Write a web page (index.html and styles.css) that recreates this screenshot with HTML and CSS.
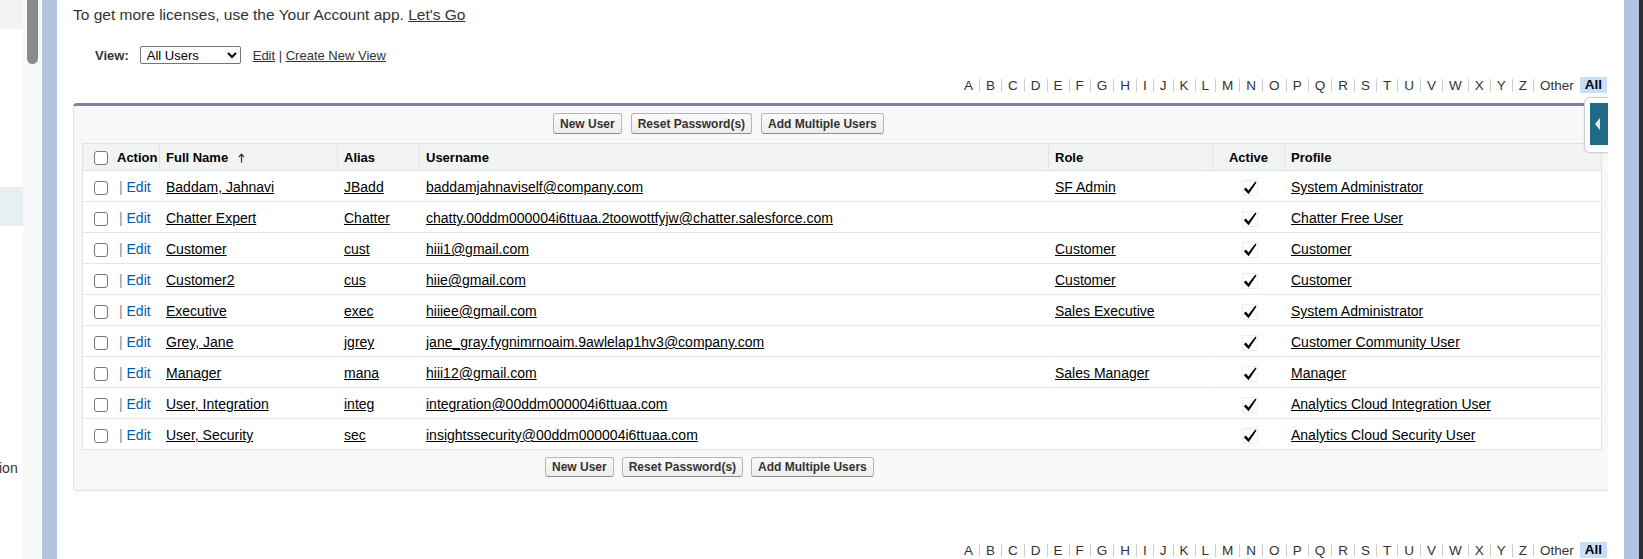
FILE: index.html
```html
<!DOCTYPE html>
<html>
<head>
<meta charset="utf-8">
<title>Users</title>
<link rel="stylesheet" href="styles.css">
</head>
<body>
<div class="frame">
  <aside class="sidebar">
    <div class="sb-top"></div>
    <div class="sb-sel"></div>
    <div class="sb-text">ion</div>
  </aside>
  <div class="scrolltrack"><div class="thumb"></div></div>
  <div class="bluebar"></div>
  <main class="content">
    <p class="notice">To get more licenses, use the Your Account app. <a href="#">Let's Go</a></p>
    <div class="viewrow">
      <label class="viewlabel">View:</label>
      <select class="viewselect"><option>All Users</option></select>
      <span class="viewlinks"><a href="#">Edit</a> | <a href="#">Create New View</a></span>
    </div>
    <div class="alpha">
      <span>A</span><span>B</span><span>C</span><span>D</span><span>E</span><span>F</span><span>G</span><span>H</span><span>I</span><span>J</span><span>K</span><span>L</span><span>M</span><span>N</span><span>O</span><span>P</span><span>Q</span><span>R</span><span>S</span><span>T</span><span>U</span><span>V</span><span>W</span><span>X</span><span>Y</span><span>Z</span><span>Other</span><span class="all">All</span>
    </div>
    <div class="panel">
      <div class="btnrow btnrow-top">
        <button class="btn">New User</button><button class="btn">Reset Password(s)</button><button class="btn">Add Multiple Users</button>
      </div>
      <table class="list">
        <colgroup>
          <col class="c-action"><col class="c-name"><col class="c-alias"><col class="c-user"><col class="c-role"><col class="c-active"><col class="c-profile">
        </colgroup>
        <thead>
          <tr>
            <th class="th-action"><input type="checkbox" class="cb"><span class="action-label">Action</span></th>
            <th>Full Name <svg class="sortarrow" width="7" height="10" viewBox="0 0 7 10"><path d="M3.5 9.5V1.5M1 4L3.5 1.2L6 4" fill="none" stroke="#333" stroke-width="1.2"/></svg></th>
            <th>Alias</th>
            <th>Username</th>
            <th>Role</th>
            <th class="th-active">Active</th>
            <th>Profile</th>
          </tr>
        </thead>
        <tbody>
          <tr>
            <td class="td-action"><input type="checkbox" class="cb"><span class="pipe">|</span> <a href="#" class="edit">Edit</a></td>
            <td><a href="#">Baddam, Jahnavi</a></td><td><a href="#">JBadd</a></td><td><a href="#">baddamjahnaviself@company.com</a></td><td><a href="#">SF Admin</a></td>
            <td class="td-active"><svg class="chk" width="16" height="16" viewBox="0 0 16 16"><rect x="0.5" y="0.5" width="15" height="15" fill="none" stroke="#dadada" stroke-dasharray="1 1"/><path d="M1.8 9.2L3.9 7.6L6.4 10.6L13.4 1.6L14.5 2.5L6.6 14.2Z" fill="#000"/></svg></td>
            <td><a href="#">System Administrator</a></td>
          </tr>
          <tr>
            <td class="td-action"><input type="checkbox" class="cb"><span class="pipe">|</span> <a href="#" class="edit">Edit</a></td>
            <td><a href="#">Chatter Expert</a></td><td><a href="#">Chatter</a></td><td><a href="#">chatty.00ddm000004i6ttuaa.2toowottfyjw@chatter.salesforce.com</a></td><td></td>
            <td class="td-active"><svg class="chk" width="16" height="16" viewBox="0 0 16 16"><rect x="0.5" y="0.5" width="15" height="15" fill="none" stroke="#dadada" stroke-dasharray="1 1"/><path d="M1.8 9.2L3.9 7.6L6.4 10.6L13.4 1.6L14.5 2.5L6.6 14.2Z" fill="#000"/></svg></td>
            <td><a href="#">Chatter Free User</a></td>
          </tr>
          <tr>
            <td class="td-action"><input type="checkbox" class="cb"><span class="pipe">|</span> <a href="#" class="edit">Edit</a></td>
            <td><a href="#">Customer</a></td><td><a href="#">cust</a></td><td><a href="#">hiii1@gmail.com</a></td><td><a href="#">Customer</a></td>
            <td class="td-active"><svg class="chk" width="16" height="16" viewBox="0 0 16 16"><rect x="0.5" y="0.5" width="15" height="15" fill="none" stroke="#dadada" stroke-dasharray="1 1"/><path d="M1.8 9.2L3.9 7.6L6.4 10.6L13.4 1.6L14.5 2.5L6.6 14.2Z" fill="#000"/></svg></td>
            <td><a href="#">Customer</a></td>
          </tr>
          <tr>
            <td class="td-action"><input type="checkbox" class="cb"><span class="pipe">|</span> <a href="#" class="edit">Edit</a></td>
            <td><a href="#">Customer2</a></td><td><a href="#">cus</a></td><td><a href="#">hiie@gmail.com</a></td><td><a href="#">Customer</a></td>
            <td class="td-active"><svg class="chk" width="16" height="16" viewBox="0 0 16 16"><rect x="0.5" y="0.5" width="15" height="15" fill="none" stroke="#dadada" stroke-dasharray="1 1"/><path d="M1.8 9.2L3.9 7.6L6.4 10.6L13.4 1.6L14.5 2.5L6.6 14.2Z" fill="#000"/></svg></td>
            <td><a href="#">Customer</a></td>
          </tr>
          <tr>
            <td class="td-action"><input type="checkbox" class="cb"><span class="pipe">|</span> <a href="#" class="edit">Edit</a></td>
            <td><a href="#">Executive</a></td><td><a href="#">exec</a></td><td><a href="#">hiiiee@gmail.com</a></td><td><a href="#">Sales Executive</a></td>
            <td class="td-active"><svg class="chk" width="16" height="16" viewBox="0 0 16 16"><rect x="0.5" y="0.5" width="15" height="15" fill="none" stroke="#dadada" stroke-dasharray="1 1"/><path d="M1.8 9.2L3.9 7.6L6.4 10.6L13.4 1.6L14.5 2.5L6.6 14.2Z" fill="#000"/></svg></td>
            <td><a href="#">System Administrator</a></td>
          </tr>
          <tr>
            <td class="td-action"><input type="checkbox" class="cb"><span class="pipe">|</span> <a href="#" class="edit">Edit</a></td>
            <td><a href="#">Grey, Jane</a></td><td><a href="#">jgrey</a></td><td><a href="#">jane_gray.fygnimrnoaim.9awlelap1hv3@company.com</a></td><td></td>
            <td class="td-active"><svg class="chk" width="16" height="16" viewBox="0 0 16 16"><rect x="0.5" y="0.5" width="15" height="15" fill="none" stroke="#dadada" stroke-dasharray="1 1"/><path d="M1.8 9.2L3.9 7.6L6.4 10.6L13.4 1.6L14.5 2.5L6.6 14.2Z" fill="#000"/></svg></td>
            <td><a href="#">Customer Community User</a></td>
          </tr>
          <tr>
            <td class="td-action"><input type="checkbox" class="cb"><span class="pipe">|</span> <a href="#" class="edit">Edit</a></td>
            <td><a href="#">Manager</a></td><td><a href="#">mana</a></td><td><a href="#">hiii12@gmail.com</a></td><td><a href="#">Sales Manager</a></td>
            <td class="td-active"><svg class="chk" width="16" height="16" viewBox="0 0 16 16"><rect x="0.5" y="0.5" width="15" height="15" fill="none" stroke="#dadada" stroke-dasharray="1 1"/><path d="M1.8 9.2L3.9 7.6L6.4 10.6L13.4 1.6L14.5 2.5L6.6 14.2Z" fill="#000"/></svg></td>
            <td><a href="#">Manager</a></td>
          </tr>
          <tr>
            <td class="td-action"><input type="checkbox" class="cb"><span class="pipe">|</span> <a href="#" class="edit">Edit</a></td>
            <td><a href="#">User, Integration</a></td><td><a href="#">integ</a></td><td><a href="#">integration@00ddm000004i6ttuaa.com</a></td><td></td>
            <td class="td-active"><svg class="chk" width="16" height="16" viewBox="0 0 16 16"><rect x="0.5" y="0.5" width="15" height="15" fill="none" stroke="#dadada" stroke-dasharray="1 1"/><path d="M1.8 9.2L3.9 7.6L6.4 10.6L13.4 1.6L14.5 2.5L6.6 14.2Z" fill="#000"/></svg></td>
            <td><a href="#">Analytics Cloud Integration User</a></td>
          </tr>
          <tr>
            <td class="td-action"><input type="checkbox" class="cb"><span class="pipe">|</span> <a href="#" class="edit">Edit</a></td>
            <td><a href="#">User, Security</a></td><td><a href="#">sec</a></td><td><a href="#">insightssecurity@00ddm000004i6ttuaa.com</a></td><td></td>
            <td class="td-active"><svg class="chk" width="16" height="16" viewBox="0 0 16 16"><rect x="0.5" y="0.5" width="15" height="15" fill="none" stroke="#dadada" stroke-dasharray="1 1"/><path d="M1.8 9.2L3.9 7.6L6.4 10.6L13.4 1.6L14.5 2.5L6.6 14.2Z" fill="#000"/></svg></td>
            <td><a href="#">Analytics Cloud Security User</a></td>
          </tr>
        </tbody>
      </table>
      <div class="btnrow btnrow-bottom">
        <button class="btn">New User</button><button class="btn">Reset Password(s)</button><button class="btn">Add Multiple Users</button>
      </div>
    </div>
    <div class="alpha alpha-bottom">
      <span>A</span><span>B</span><span>C</span><span>D</span><span>E</span><span>F</span><span>G</span><span>H</span><span>I</span><span>J</span><span>K</span><span>L</span><span>M</span><span>N</span><span>O</span><span>P</span><span>Q</span><span>R</span><span>S</span><span>T</span><span>U</span><span>V</span><span>W</span><span>X</span><span>Y</span><span>Z</span><span>Other</span><span class="all">All</span>
    </div>
    <div class="sidetab"><div class="sidetab-inner"><span class="tri"></span></div></div>
  </main>
  <div class="gap"></div>
  <div class="bluebar"></div>
  <div class="darkbar"></div>
</div>
</body>
</html>
```
FILE: styles.css
```css
* { box-sizing: border-box; }
html, body { margin: 0; padding: 0; }
body {
  width: 1643px;
  height: 559px;
  overflow: hidden;
  background: #fff;
  color: #000;
  font-family: "Liberation Sans", Arial, sans-serif;
}
.frame { display: flex; height: 559px; }

/* left sidebar (cut off) */
.sidebar { width: 23px; flex: none; overflow: hidden; display: flex; flex-direction: column; background: #fff; }
.sb-top { height: 29px; background: #f3f3f3; }
.sb-sel { height: 39px; margin-top: 158px; background: #e8eff2; }
.sb-text { margin-top: 234px; margin-left: -1px; font-size: 14px; line-height: 16px; color: #333; white-space: nowrap; }

.scrolltrack { width: 19px; flex: none; background: #f9f9f9; padding-left: 4px; }
.thumb { width: 11px; height: 64px; background: #8a8a8a; border-radius: 0 0 6px 6px; }
.bluebar { width: 15px; flex: none; background: #b0c4df; }
.gap { width: 16px; flex: none; background: #fff; }
.darkbar { width: 4px; flex: none; background: #2e2e2e; }

/* main */
.content { width: 1551px; flex: none; position: relative; overflow: hidden; padding: 5px 0 0 16px; }
.notice { margin: 0; font-size: 15.5px; line-height: 20px; color: #333; }
.notice a { color: #333; }

.viewrow { margin-top: 21px; padding-left: 22px; display: flex; align-items: center; height: 18px; }
.viewlabel { font-weight: bold; font-size: 13px; color: #333; margin-right: 11px; }
.viewselect { width: 101px; height: 18px; font-family: "Liberation Sans", Arial, sans-serif; font-size: 13px; color: #000; margin: 0 12px 0 0; padding: 0 0 0 2px; border: 1px solid #767676; border-radius: 2px; background: #fff; }
.viewlinks { font-size: 13px; color: #333; }
.viewlinks a { color: #333; }

.alpha { margin-top: 13px; display: flex; justify-content: flex-end; align-items: center; height: 16px; padding-right: 1px; font-size: 13.5px; color: #333; }
.alpha span { padding: 0 6px; line-height: 13px; border-left: 1px solid #cfcfcf; }
.alpha span:first-child { border-left: none; }
.alpha .all { font-weight: bold; color: #000; background: #c6dff9; line-height: 16px; padding: 0 5px; border-left: none; }
.alpha-bottom { margin-top: 51px; }

.panel {
  margin-top: 10px;
  background: #f8f8f8;
  border-top: 3px solid #7a859d;
  border-left: 1px solid #e0e0e0;
  border-bottom: 1px solid #e0e0e0;
  border-radius: 4px 0 0 4px;
  padding: 7px 6px 13px 8px;
}
.btnrow { display: flex; height: 21px; }
.btnrow-top { padding-left: 471px; gap: 9px; }
.btnrow-bottom { padding-left: 463px; gap: 8px; margin-top: 7px; height: 20px; }
.btn {
  height: 100%;
  margin: 0;
  padding: 0 6px;
  font-family: "Liberation Sans", Arial, sans-serif;
  font-size: 12px;
  font-weight: bold;
  color: #333;
  background: linear-gradient(#fbfbfb, #ececec);
  border: 1px solid #b5b5b5;
  border-bottom-color: #8f8f8f;
  border-radius: 3px;
}

.list {
  margin-top: 9px;
  width: 1520px;
  table-layout: fixed;
  border-collapse: separate;
  border-spacing: 0;
  border: 1px solid #e0e3e5;
  background: #fff;
}
.c-action { width: 76px; }
.c-name { width: 178px; }
.c-alias { width: 82px; }
.c-user { width: 629px; }
.c-role { width: 164px; }
.c-active { width: 72px; }
.c-profile { width: 317px; }

.list th {
  height: 27px;
  padding: 0 6px;
  background: #f2f3f3;
  border-left: 1px solid #e0e3e5;
  border-bottom: 1px solid #e0e3e5;
  text-align: left;
  vertical-align: middle;
  font-size: 13px;
  font-weight: bold;
  color: #000;
  white-space: nowrap;
}
.list th.th-action { border-left: none; padding-left: 11px; padding-right: 0; }
.list th.th-active { text-align: center; }
.action-label { margin-left: 9px; vertical-align: middle; }
.sortarrow { margin-left: 6px; vertical-align: -1px; }

.list td {
  height: 31px;
  padding: 2px 6px 0;
  border-left: 1px solid transparent;
  border-bottom: 1px solid #e6e6e6;
  vertical-align: middle;
  font-size: 14px;
  white-space: nowrap;
  overflow: hidden;
}
.list tbody tr:last-child td { border-bottom: none; height: 30px; }
.list td:first-child { border-left: none; }
.list td a { color: #000; }
.list td.td-action { padding-left: 11px; padding-right: 0; }
.list td.td-active { text-align: center; padding: 2px 0 0 2px; }
.chk { display: inline-block; vertical-align: middle; }

.cb {
  appearance: none;
  -webkit-appearance: none;
  width: 14px;
  height: 14px;
  margin: 0;
  border: 1px solid #767676;
  border-radius: 3px;
  background: #fff;
  vertical-align: middle;
}
.pipe { margin-left: 11px; color: #8c8c8c; }
.list td a.edit { color: #015ba7; text-decoration: none; }

/* collapsible side tab overlay */
.sidetab {
  position: absolute;
  left: 1527px;
  top: 97px;
  width: 34px;
  height: 56px;
  background: #fff;
  border: 1px solid #cfcfcf;
  border-radius: 6px 0 0 6px;
  box-shadow: 0 0 2px rgba(0,0,0,0.15);
  padding: 5px 0 0 5px;
}
.sidetab-inner { width: 40px; height: 42px; background: #216985; position: relative; }
.tri {
  position: absolute;
  left: 5px;
  top: 15px;
  width: 0;
  height: 0;
  border-top: 6px solid transparent;
  border-bottom: 6px solid transparent;
  border-right: 5px solid #e6e6e6;
}
```
